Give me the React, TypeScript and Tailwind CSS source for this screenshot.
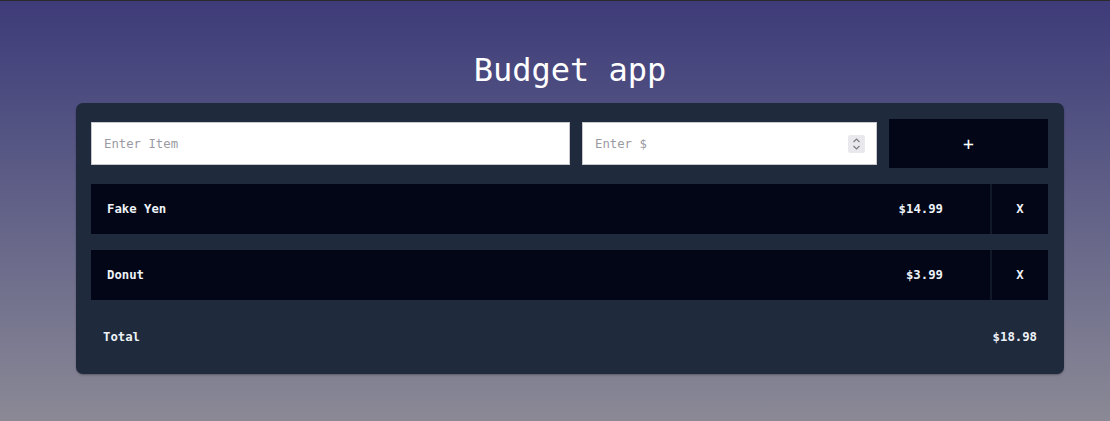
import React from "react";

const items = [
  { name: "Fake Yen", price: "$14.99" },
  { name: "Donut", price: "$3.99" },
];

export default function App() {
  return (
    <div
      className="min-h-[421px] w-full border-t border-[#2a2a2e] bg-gradient-to-b from-[#3e3b79] to-[#8b8995] text-white"
      style={{ fontFamily: '"DejaVu Sans Mono", "Liberation Mono", monospace' }}
    >
      <div className="ml-[76px] w-[988px]">
        <h1 className="pt-[50px] mb-[14px] text-center text-[32px] leading-[38px] text-white">
          Budget app
        </h1>
        <div className="rounded-[7px] bg-[#1f2a3c] px-[15px] pr-[16px] pt-[16px] pb-[16px] shadow-[0_1px_2px_rgba(0,0,0,0.3)]">
          <div className="flex items-center gap-[12px]">
            <input
              type="text"
              placeholder="Enter Item"
              className="h-[43px] w-[479px] border border-[#c8c8cc] bg-white pl-[12px] text-[12.3px] text-black outline-none placeholder:text-[#9a9aa3]"
            />
            <div className="relative">
              <input
                type="text"
                placeholder="Enter $"
                className="h-[43px] w-[295px] border border-[#c8c8cc] bg-white pl-[12px] text-[12.3px] text-black outline-none placeholder:text-[#9a9aa3]"
              />
              <div className="absolute left-[266px] top-[13px] flex h-[18px] w-[17px] items-center justify-center rounded-[2px] bg-[#e9e9ed]">
                <svg width="9" height="14" viewBox="0 0 9 14" fill="none" stroke="#7b7b82" strokeWidth="1.2">
                  <path d="M1.5 5 L4.5 2 L7.5 5" />
                  <path d="M1.5 9 L4.5 12 L7.5 9" />
                </svg>
              </div>
            </div>
            <button className="flex h-[49px] flex-1 items-center justify-center bg-[#020617] text-[18px] text-white">
              +
            </button>
          </div>

          {items.map((it) => (
            <div key={it.name} className="mt-[16px] flex h-[50px] bg-[#020617] text-[12.3px] font-bold text-[#eef2f7]">
              <div className="flex flex-1 items-center pl-[16px] pt-[1px]">{it.name}</div>
              <div className="flex items-center pr-[47px] pt-[1px]">{it.price}</div>
              <div className="flex w-[58px] items-center justify-center border-l-2 border-[#111827] pt-[1px]">X</div>
            </div>
          ))}

          <div className="mt-[16px] flex h-[42px] items-center justify-between px-[12px] pr-[11px] pt-[1px] text-[12.3px] font-bold text-[#eef2f7]">
            <span>Total</span>
            <span>$18.98</span>
          </div>
        </div>
      </div>
    </div>
  );
}
